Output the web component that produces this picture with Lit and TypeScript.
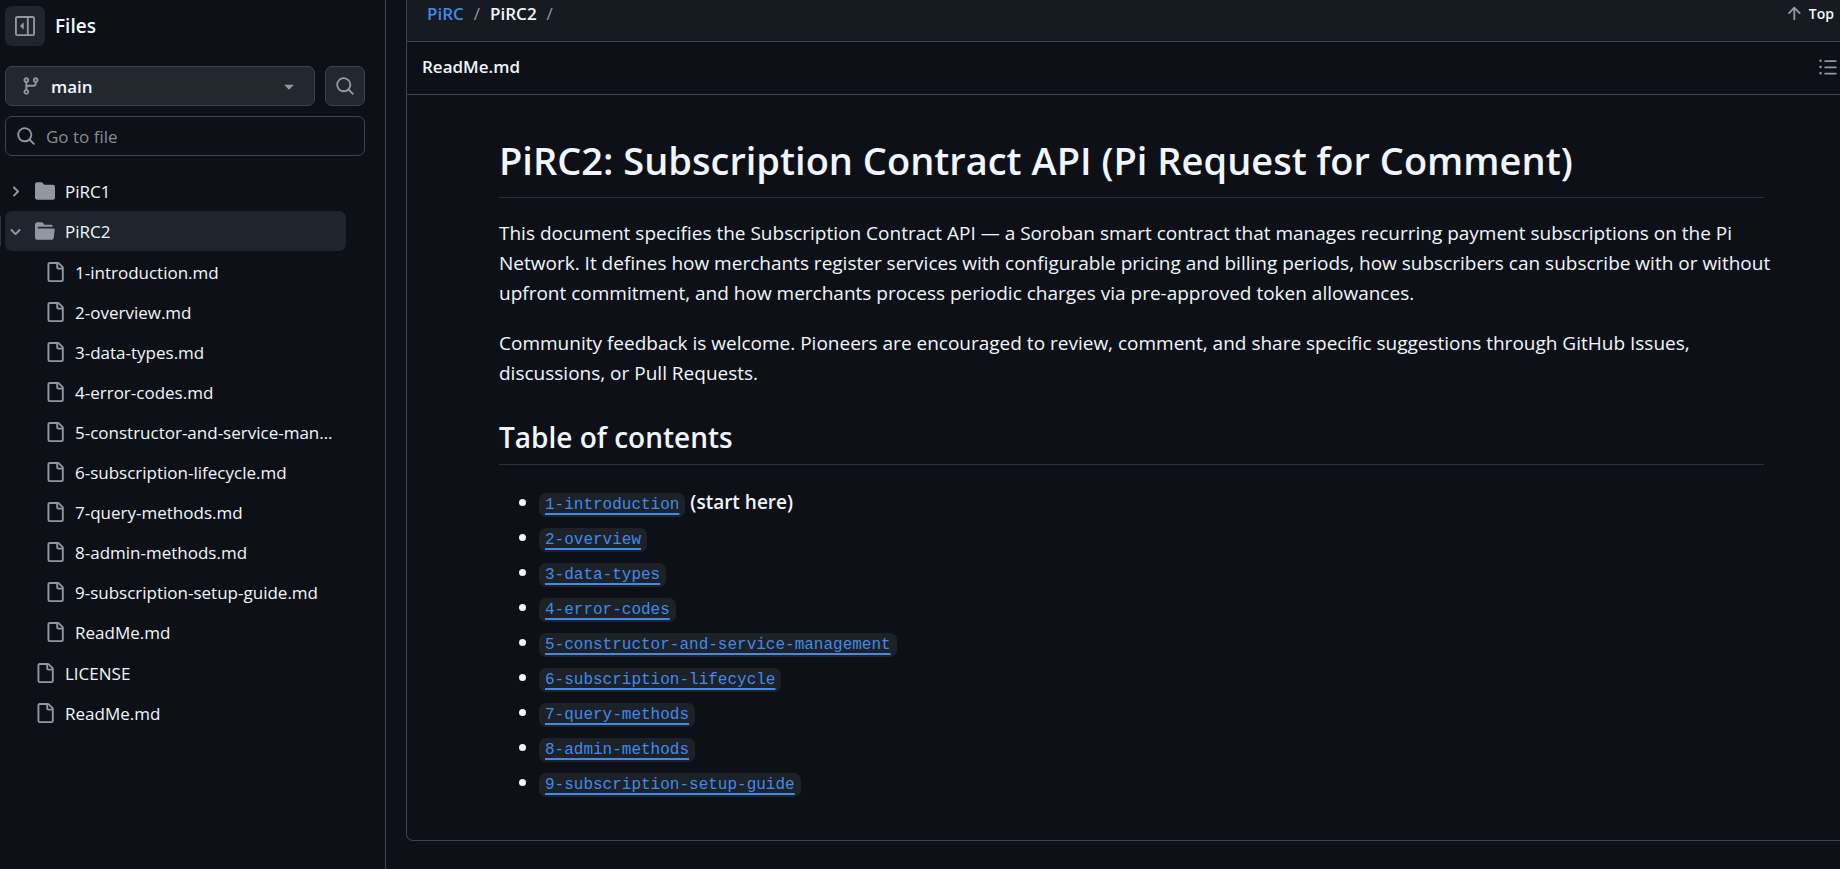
import { LitElement, html, css, svg, nothing } from "lit";
import { customElement, property, state } from "lit/decorators.js";
import { classMap } from "lit/directives/class-map.js";

const ICONS: Record<string, string[]> = {
  sidebar: [
    "m4.177 7.823 2.396-2.396A.25.25 0 0 1 7 5.604v4.792a.25.25 0 0 1-.427.177L4.177 8.177a.25.25 0 0 1 0-.354Z",
    "M0 1.75C0 .784.784 0 1.75 0h12.5C15.216 0 16 .784 16 1.75v12.5A1.75 1.75 0 0 1 14.25 16H1.75A1.75 1.75 0 0 1 0 14.25Zm1.75-.25a.25.25 0 0 0-.25.25v12.5c0 .138.112.25.25.25H9.5v-13Zm12.5 13a.25.25 0 0 0 .25-.25V1.75a.25.25 0 0 0-.25-.25H11v13Z",
  ],
  branch: [
    "M9.5 3.25a2.25 2.25 0 1 1 3 2.122V6A2.5 2.5 0 0 1 10 8.5H6a1 1 0 0 0-1 1v1.128a2.251 2.251 0 1 1-1.5 0V5.372a2.25 2.25 0 1 1 1.5 0v1.836A2.493 2.493 0 0 1 6 7h4a1 1 0 0 0 1-1v-.628A2.25 2.25 0 0 1 9.5 3.25Zm-6 0a.75.75 0 1 0 1.5 0 .75.75 0 0 0-1.5 0Zm8.25-.75a.75.75 0 1 0 0 1.5.75.75 0 0 0 0-1.5ZM4.25 12a.75.75 0 1 0 0 1.5.75.75 0 0 0 0-1.5Z",
  ],
  triangle: [
    "m4.427 7.427 3.396 3.396a.25.25 0 0 0 .354 0l3.396-3.396A.25.25 0 0 0 11.396 7H4.604a.25.25 0 0 0-.177.427Z",
  ],
  search: [
    "M10.68 11.74a6 6 0 0 1-7.922-8.982 6 6 0 0 1 8.982 7.922l3.04 3.04a.749.749 0 0 1-.326 1.275.749.749 0 0 1-.734-.215ZM11.5 7a4.499 4.499 0 1 0-8.997 0A4.499 4.499 0 0 0 11.5 7Z",
  ],
  folder: [
    "M1.75 1A1.75 1.75 0 0 0 0 2.75v10.5C0 14.216.784 15 1.75 15h12.5A1.75 1.75 0 0 0 16 13.25v-8.5A1.75 1.75 0 0 0 14.25 3H7.5a.25.25 0 0 1-.2-.1l-.9-1.2C6.07 1.26 5.55 1 5 1H1.75Z",
  ],
  folderOpen: [
    "M.513 1.513A1.75 1.75 0 0 1 1.75 1h3.5c.55 0 1.07.26 1.4.7l.9 1.2a.25.25 0 0 0 .2.1H13a1 1 0 0 1 1 1v.5H2.75a.75.75 0 0 0 0 1.5h11.978a1 1 0 0 1 .994 1.117L15 13.25A1.75 1.75 0 0 1 13.25 15H1.75A1.75 1.75 0 0 1 0 13.25V2.75c0-.464.184-.91.513-1.237Z",
  ],
  file: [
    "M2 1.75C2 .784 2.784 0 3.75 0h6.586c.464 0 .909.184 1.237.513l2.914 2.914c.329.328.513.773.513 1.237v9.586A1.75 1.75 0 0 1 13.25 16h-9.5A1.75 1.75 0 0 1 2 14.25Zm1.75-.25a.25.25 0 0 0-.25.25v12.5c0 .138.112.25.25.25h9.5a.25.25 0 0 0 .25-.25V6h-2.75A1.75 1.75 0 0 1 9 4.25V1.5Zm6.75.062V4.25c0 .138.112.25.25.25h2.688l-.011-.013-2.914-2.914-.013-.011Z",
  ],
  arrowUp: [
    "M3.47 7.78a.75.75 0 0 1 0-1.06l4.25-4.25a.75.75 0 0 1 1.06 0l4.25 4.25a.751.751 0 0 1-.018 1.042.751.751 0 0 1-1.042.018L9 4.81v7.44a.75.75 0 0 1-1.5 0V4.81L4.53 7.78a.75.75 0 0 1-1.06 0Z",
  ],
  list: [
    "M5.75 2.5h8.5a.75.75 0 0 1 0 1.5h-8.5a.75.75 0 0 1 0-1.5Zm0 5h8.5a.75.75 0 0 1 0 1.5h-8.5a.75.75 0 0 1 0-1.5Zm0 5h8.5a.75.75 0 0 1 0 1.5h-8.5a.75.75 0 0 1 0-1.5ZM2 14a1 1 0 1 1 0-2 1 1 0 0 1 0 2Zm1-6a1 1 0 1 1-2 0 1 1 0 0 1 2 0ZM2 4a1 1 0 1 1 0-2 1 1 0 0 1 0 2Z",
  ],
  chevronRight: [
    "M4.7 10c-.2 0-.4-.1-.5-.2-.3-.3-.3-.8 0-1.1L6.9 6 4.2 3.3c-.3-.3-.3-.8 0-1.1.3-.3.8-.3 1.1 0l3.3 3.2c.3.3.3.8 0 1.1L5.3 9.7c-.2.2-.4.3-.6.3Z",
  ],
  chevronDown: [
    "M6 8.825c-.2 0-.4-.1-.5-.2l-3.3-3.3c-.3-.3-.3-.8 0-1.1.3-.3.8-.3 1.1 0l2.7 2.7 2.7-2.7c.3-.3.8-.3 1.1 0 .3.3.3.8 0 1.1l-3.2 3.2c-.2.2-.4.3-.6.3Z",
  ],
};

const icon = (name: string, grid = 16) => html`
  <svg class=${grid === 12 ? "icon icon-small" : "icon"} viewBox="0 0 ${grid} ${grid}" aria-hidden="true">
    ${ICONS[name].map((d) => svg`<path d=${d}></path>`)}
  </svg>`;

const shared = css`
  * { box-sizing: border-box; }
  .icon { display: block; flex: none; width: 20px; height: 20px; fill: #9198a1; }
  .icon-small { width: 15px; height: 15px; }
  button { font: inherit; color: inherit; cursor: pointer; }
  a { color: inherit; text-decoration: none; }
`;

interface TreeNode {
  name: string;
  children?: TreeNode[];
}

const CHAPTERS = [
  "1-introduction",
  "2-overview",
  "3-data-types",
  "4-error-codes",
  "5-constructor-and-service-management",
  "6-subscription-lifecycle",
  "7-query-methods",
  "8-admin-methods",
  "9-subscription-setup-guide",
];

const TREE: TreeNode[] = [
  { name: "PiRC1", children: [] },
  { name: "PiRC2", children: [...CHAPTERS.map((c) => ({ name: `${c}.md` })), { name: "ReadMe.md" }] },
  { name: "LICENSE" },
  { name: "ReadMe.md" },
];

@customElement("file-sidebar")
class FileSidebar extends LitElement {
  @property() current = "";
  @state() private open = new Set(["PiRC2"]);

  static styles = [
    shared,
    css`
      :host { display: block; flex: none; width: 386px; padding: 6px 20px 0 5px; border-right: 1px solid #3d444d; }
      .head { display: flex; align-items: center; gap: 10px; margin-bottom: 20px; }
      .toggle {
        display: grid; place-items: center; width: 40px; height: 40px; padding: 0;
        border: 0; border-radius: 7px; background: #20262d;
      }
      h2 { margin: 0; font-size: 19px; font-weight: 600; line-height: 30px; }
      .tools { display: flex; gap: 10px; margin-bottom: 10px; }
      .branch, .find {
        display: flex; align-items: center; height: 40px;
        border: 1px solid #3d444d; border-radius: 7px; background: #21282e;
      }
      .branch { flex: 1; gap: 10px; padding: 0 15px; font-size: 17px; font-weight: 600; }
      .branch span { flex: 1; text-align: left; }
      .find { justify-content: center; width: 40px; padding: 0; }
      .filter {
        display: flex; align-items: center; gap: 10px; height: 40px; padding: 0 10px;
        border: 1px solid #3d444d; border-radius: 7px;
      }
      .filter input {
        flex: 1; min-width: 0; padding: 0; border: 0; outline: 0; background: none;
        color: #f0f6fc; font: inherit; font-size: 17px;
      }
      .filter input::placeholder { color: #858c95; opacity: 1; }
      ul { margin: 0; padding: 0; list-style: none; }
      .tree { margin: 15px 19px 0 0; }
      .nested { padding: 1px 0; }
      .row {
        position: relative; display: flex; align-items: center; width: 100%; height: 40px;
        padding: 0 10px 0 3px; border: 0; border-radius: 7px; background: none;
        font-size: 17px; text-align: left;
      }
      .row.current { background: #1f252c; }
      .row.current::before {
        content: ""; position: absolute; left: -5px; top: 5px; bottom: 5px; width: 1px; background: #2c333a;
      }
      .leaf { padding-left: 30px; }
      .nested .leaf { padding-left: 40px; }
      .row .icon-small { margin-right: 12px; }
      .name { margin-left: 10px; overflow: hidden; text-overflow: ellipsis; white-space: nowrap; }
    `,
  ];

  private flip(name: string) {
    const next = new Set(this.open);
    next.has(name) ? next.delete(name) : next.add(name);
    this.open = next;
  }

  private node(n: TreeNode): unknown {
    if (!n.children) {
      return html`<li><a class="row leaf" href="#${n.name}">${icon("file")}<span class="name">${n.name}</span></a></li>`;
    }
    const isOpen = this.open.has(n.name);
    return html`<li>
      <button
        class=${classMap({ row: true, current: n.name === this.current })}
        aria-expanded=${isOpen ? "true" : "false"}
        @click=${() => this.flip(n.name)}
      >
        ${icon(isOpen ? "chevronDown" : "chevronRight", 12)}${icon(isOpen ? "folderOpen" : "folder")}
        <span class="name">${n.name}</span>
      </button>
      ${isOpen && n.children.length ? html`<ul class="nested">${n.children.map((c) => this.node(c))}</ul>` : nothing}
    </li>`;
  }

  render() {
    return html`
      <div class="head">
        <button class="toggle" aria-label="Collapse file tree">${icon("sidebar")}</button>
        <h2>Files</h2>
      </div>
      <div class="tools">
        <button class="branch" aria-haspopup="menu">${icon("branch")}<span>main</span>${icon("triangle")}</button>
        <button class="find" aria-label="Search this repository">${icon("search")}</button>
      </div>
      <label class="filter">
        ${icon("search")}
        <input type="text" placeholder="Go to file" aria-label="Go to file" />
      </label>
      <nav aria-label="File tree"><ul class="tree">${TREE.map((n) => this.node(n))}</ul></nav>
    `;
  }
}

@customElement("readme-article")
class ReadmeArticle extends LitElement {
  static styles = [
    shared,
    css`
      :host { display: block; padding: 40px 76px 43px 92px; font-size: 19px; line-height: 30px; }
      h1, h2 { border-bottom: 1px solid #2b3138; font-weight: 600; }
      h1 { margin: 0 0 20px; padding-bottom: 12px; font-size: 38px; line-height: 50px; }
      h2 { margin: 30px 0 22px; padding-bottom: 8px; font-size: 28px; line-height: 38px; }
      p { margin: 0 -8px 20px 0; }
      ul { margin: 0; padding-left: 40px; }
      li + li { margin-top: 5px; }
      li a { color: #4389e8; text-decoration: underline; text-decoration-thickness: 2px; text-underline-offset: 4px; }
      code {
        padding: 3px 6px; border-radius: 7px; background: #1c2228;
        font-family: "Liberation Mono", monospace; font-size: 16px; line-height: 20px;
      }
      strong { font-weight: 600; }
    `,
  ];

  render() {
    return html`
      <h1>PiRC2: Subscription Contract API (Pi Request for Comment)</h1>
      <p>
        This document specifies the Subscription Contract API — a Soroban smart contract that manages recurring
        payment subscriptions on the Pi Network. It defines how merchants register services with configurable pricing
        and billing periods, how subscribers can subscribe with or without upfront commitment, and how merchants
        process periodic charges via pre-approved token allowances.
      </p>
      <p>
        Community feedback is welcome. Pioneers are encouraged to review, comment, and share specific suggestions
        through GitHub Issues, discussions, or Pull Requests.
      </p>
      <h2>Table of contents</h2>
      <ul>
        ${CHAPTERS.map(
          (c, i) => html`<li><a href="#${c}"><code>${c}</code></a>${i === 0 ? html` <strong>(start here)</strong>` : nothing}</li>`
        )}
      </ul>
    `;
  }
}

@customElement("app-root")
class AppRoot extends LitElement {
  static styles = [
    shared,
    css`
      :host {
        display: flex; min-height: 100vh; overflow: hidden; background: #0d1117; color: #f0f6fc;
        font-family: "Open Sans", "Noto Sans", sans-serif;
      }
      main { flex: 1; min-width: 0; padding-left: 20px; }
      .panel { border: 1px solid #3d444d; border-width: 0 0 1px 1px; border-bottom-left-radius: 7px; }
      .crumbs, .title { display: flex; align-items: center; justify-content: space-between; border-bottom: 1px solid #3d444d; }
      .crumbs { padding: 0 6px 13px 20px; background: #151b21; font-size: 17px; line-height: 28px; }
      .crumbs ol { display: flex; gap: 10px; margin: 0; padding: 0; list-style: none; font-weight: 600; }
      .crumbs li { display: flex; gap: 10px; }
      .crumbs a { color: #4389e8; }
      .sep { color: #9198a1; font-weight: 400; }
      .top {
        display: flex; align-items: center; gap: 5px; height: 28px; padding: 0;
        border: 0; background: none; font-size: 14px; font-weight: 600;
      }
      .title { height: 53px; padding: 0 2px 2px 15px; }
      .title h2 { margin: 0; font-size: 17px; font-weight: 600; line-height: 30px; }
      .outline { padding: 0; border: 0; background: none; }
    `,
  ];

  render() {
    return html`
      <file-sidebar current="PiRC2"></file-sidebar>
      <main>
        <div class="panel">
          <div class="crumbs">
            <nav aria-label="Breadcrumb">
              <ol>
                <li><a href="#PiRC">PiRC</a><span class="sep">/</span></li>
                <li><span>PiRC2</span><span class="sep">/</span></li>
              </ol>
            </nav>
            <button class="top">${icon("arrowUp")}Top</button>
          </div>
          <div class="title">
            <h2>ReadMe.md</h2>
            <button class="outline" aria-label="Outline">${icon("list")}</button>
          </div>
          <readme-article></readme-article>
        </div>
      </main>
    `;
  }
}
